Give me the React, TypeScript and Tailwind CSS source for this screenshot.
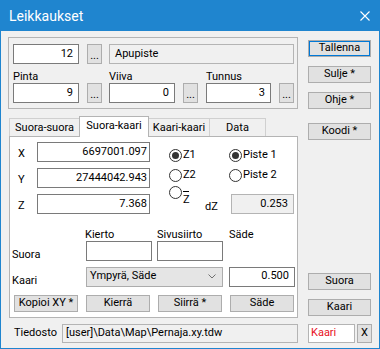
import React from "react"

const fieldBorder = "border border-[#7a7a7a]"
const btnBase = "flex items-center justify-center bg-[#e1e1e1] border border-[#adadad]"

function Field({
  w,
  value,
  left = false,
  gray = false,
  pr = "pr-[5px]",
  className = "",
}: {
  w: string
  value?: string
  left?: boolean
  gray?: boolean
  pr?: string
  className?: string
}) {
  return (
    <div
      className={`${w} h-[20px] flex items-center ${left ? "justify-start pl-[5px]" : `justify-end ${pr}`} ${
        gray ? "bg-[#f0f0f0] border border-[#b4b4b4]" : `bg-white ${fieldBorder}`
      } ${className}`}
    >
      {value}
    </div>
  )
}

function Dots({ className = "" }: { className?: string }) {
  return (
    <div className={`w-[15px] h-[20px] ${btnBase} items-end pb-[2px] ${className}`}>
      <span className="leading-none">...</span>
    </div>
  )
}

function Btn({ label, className = "", w = "w-[63px]" }: { label: string; className?: string; w?: string }) {
  return <div className={`${w} h-[17px] ${btnBase} ${className}`}>{label}</div>
}

function Radio({ checked = false, children }: { checked?: boolean; children: React.ReactNode }) {
  return (
    <div className="flex items-center h-[13px]">
      <span className="w-[13px] h-[13px] shrink-0 rounded-full border border-[#333333] bg-white flex items-center justify-center">
        {checked && <span className="w-[7px] h-[7px] rounded-full bg-[#333333]" />}
      </span>
      <span className="ml-[1px]">{children}</span>
    </div>
  )
}

function LabeledGroup({ label, w, value, className = "" }: { label: string; w: string; value: string; className?: string }) {
  return (
    <div className={`flex flex-col ${className}`}>
      <div className="h-[19px] flex items-end leading-[13px]">{label}</div>
      <div className="flex">
        <Field w={w} value={value} />
        <Dots className="ml-[8px]" />
      </div>
    </div>
  )
}

function Tab({ label, w, selected = false, className = "" }: { label: string; w: string; selected?: boolean; className?: string }) {
  if (selected) {
    return (
      <div
        className={`${w} h-[21px] -mb-px relative z-10 bg-white border-x border-t border-[#b4b4b4] flex items-center justify-center pb-[2px] ${className}`}
      >
        {label}
      </div>
    )
  }
  return (
    <div
      className={`${w} h-[18px] bg-[#f0f0f0] border-x border-t border-[#d0d0d0] flex items-center justify-center pt-[1px] ${className}`}
    >
      {label}
    </div>
  )
}

export default function App() {
  return (
    <div className="w-[380px] h-[349px] bg-[#1f85cf] font-[family-name:Roboto,sans-serif] text-[11px] text-black select-none">
      <div className="h-[31px] flex items-center justify-between pl-[9px] pr-[10px] text-white">
        <span className="text-[14px] leading-none">Leikkaukset</span>
        <svg width="10" height="10" viewBox="0 0 10 10">
          <path d="M0.5 0.5 L9.5 9.5 M9.5 0.5 L0.5 9.5" stroke="white" strokeWidth="1.1" />
        </svg>
      </div>

      <div className="mx-[1px] h-[317px] bg-[#f0f0f0]">
        <div className="flex">
          <div className="ml-[7px] mt-[6px] w-[290px]">
            {/* top group box */}
            <div className="h-[72px] border border-[#b4b4b4] pt-[6px] pl-[4px]">
              <div className="flex">
                <Field w="w-[66px]" value="12" />
                <Dots className="ml-[8px]" />
                <Field w="w-[185px]" value="Apupiste" left gray className="ml-[7px]" />
              </div>
              <div className="flex">
                <LabeledGroup label="Pinta" w="w-[66px]" value="9" />
                <LabeledGroup label="Viiva" w="w-[66px]" value="0" className="ml-[7px]" />
                <LabeledGroup label="Tunnus" w="w-[65px]" value="3" className="ml-[8px]" />
              </div>
            </div>

            {/* tabs */}
            <div className="ml-[1px] mt-[7px] w-[289px]">
              <div className="flex items-end h-[20px]">
                <Tab label="Suora-suora" w="w-[71px]" />
                <Tab label="Suora-kaari" w="w-[70px]" selected className="-ml-px" />
                <Tab label="Kaari-kaari" w="w-[62px]" className="-ml-px" />
                <Tab label="Data" w="w-[57px]" className="-ml-px" />
              </div>
              <div className="h-[182px] border border-[#b4b4b4] bg-white">
                {/* coordinates */}
                <div className="flex mt-[5px]">
                  <div className="flex flex-col gap-[6px]">
                    {[
                      ["X", "6697001.097"],
                      ["Y", "27444042.943"],
                      ["Z", "7.368"],
                    ].map(([l, v]) => (
                      <div key={l} className="flex h-[20px]">
                        <div className="w-[27px] pl-[8px] pt-[4px] flex items-center">{l}</div>
                        <Field w="w-[113px]" value={v} pr="pr-[2px]" />
                      </div>
                    ))}
                  </div>
                  <div className="ml-[19px] w-[36px] flex flex-col">
                    <div className="mt-[7px]">
                      <Radio checked>Z1</Radio>
                    </div>
                    <div className="mt-[7px]">
                      <Radio>Z2</Radio>
                    </div>
                    <div className="mt-[4px]">
                      <Radio>
                        <span className="inline-flex flex-col items-center leading-none mt-[3px]">
                          <span className="w-[6px] h-px bg-black mb-[2px]" />Z
                        </span>
                      </Radio>
                    </div>
                  </div>
                  <div className="w-[89px] flex flex-col">
                    <div className="pl-[24px] mt-[7px]">
                      <Radio checked>Piste 1</Radio>
                    </div>
                    <div className="pl-[24px] mt-[7px]">
                      <Radio>Piste 2</Radio>
                    </div>
                    <div className="flex mt-[12px]">
                      <div className="w-[26px] pt-[5px] flex items-center">dZ</div>
                      <Field w="w-[63px]" value="0.253" gray />
                    </div>
                  </div>
                </div>

                {/* suora */}
                <div className="flex mt-[12px]">
                  <div className="w-[76px] pl-[2px] flex items-end leading-[13px]">Suora</div>
                  <div className="flex flex-col">
                    <div className="h-[13px] leading-[13px] -ml-px">Kierto</div>
                    <Field w="w-[66px]" />
                  </div>
                  <div className="flex flex-col ml-[5px]">
                    <div className="h-[13px] leading-[13px]">Sivusiirto</div>
                    <Field w="w-[66px]" />
                  </div>
                  <div className="ml-[6px] h-[13px] leading-[13px]">Säde</div>
                </div>

                {/* kaari */}
                <div className="flex mt-[6px] h-[20px]">
                  <div className="w-[76px] pl-[2px] flex items-end leading-[13px]">Kaari</div>
                  <div className="w-[137px] h-[20px] bg-[#e5e5e5] border border-[#acacac] flex items-center justify-between pl-[3px] pr-[6px]">
                    <span>Ympyrä, Säde</span>
                    <svg width="8" height="5" viewBox="0 0 8 5">
                      <path d="M0.5 0.5 L4 4 L7.5 0.5" fill="none" stroke="#707070" strokeWidth="1" />
                    </svg>
                  </div>
                  <Field w="w-[66px]" value="0.500" className="ml-[6px]" />
                </div>

                {/* buttons */}
                <div className="flex mt-[8px] ml-[4px]">
                  <Btn label="Kopioi XY *" w="w-[64px]" />
                  <Btn label="Kierrä" w="w-[64px]" className="ml-[8px]" />
                  <Btn label="Siirrä *" w="w-[64px]" className="ml-[8px]" />
                  <Btn label="Säde" w="w-[64px]" className="ml-[8px]" />
                </div>
              </div>
            </div>
          </div>

          {/* right column */}
          <div className="ml-[10px] mt-[9px] w-[63px] flex flex-col">
            <Btn label="Tallenna" className="border-[#0078d7] shadow-[inset_0_0_0_1px_#0078d7]" />
            <Btn label="Sulje *" className="mt-[9px]" />
            <Btn label="Ohje *" className="mt-[9px]" />
            <Btn label="Koodi *" className="mt-[14px]" />
            <Btn label="Suora" className="mt-[133px]" />
            <Btn label="Kaari" className="mt-[9px]" />
          </div>
        </div>

        {/* bottom row */}
        <div className="flex mt-[6px] h-[19px]">
          <div className="w-[61px] pl-[13px] flex items-end pb-[2px]">Tiedosto</div>
          <div className="w-[236px] h-[19px] bg-[#f0f0f0] border border-[#b4b4b4] flex items-center pl-[3px]">
            [user]\Data\Map\Pernaja.xy.tdw
          </div>
          <div className="ml-[10px] w-[47px] h-[19px] bg-white border border-[#b4b4b4] flex items-center pl-[2px] text-[#e81123]">
            Kaari
          </div>
          <div className={`ml-[2px] w-[15px] h-[19px] ${btnBase}`}>X</div>
        </div>
      </div>
    </div>
  )
}
